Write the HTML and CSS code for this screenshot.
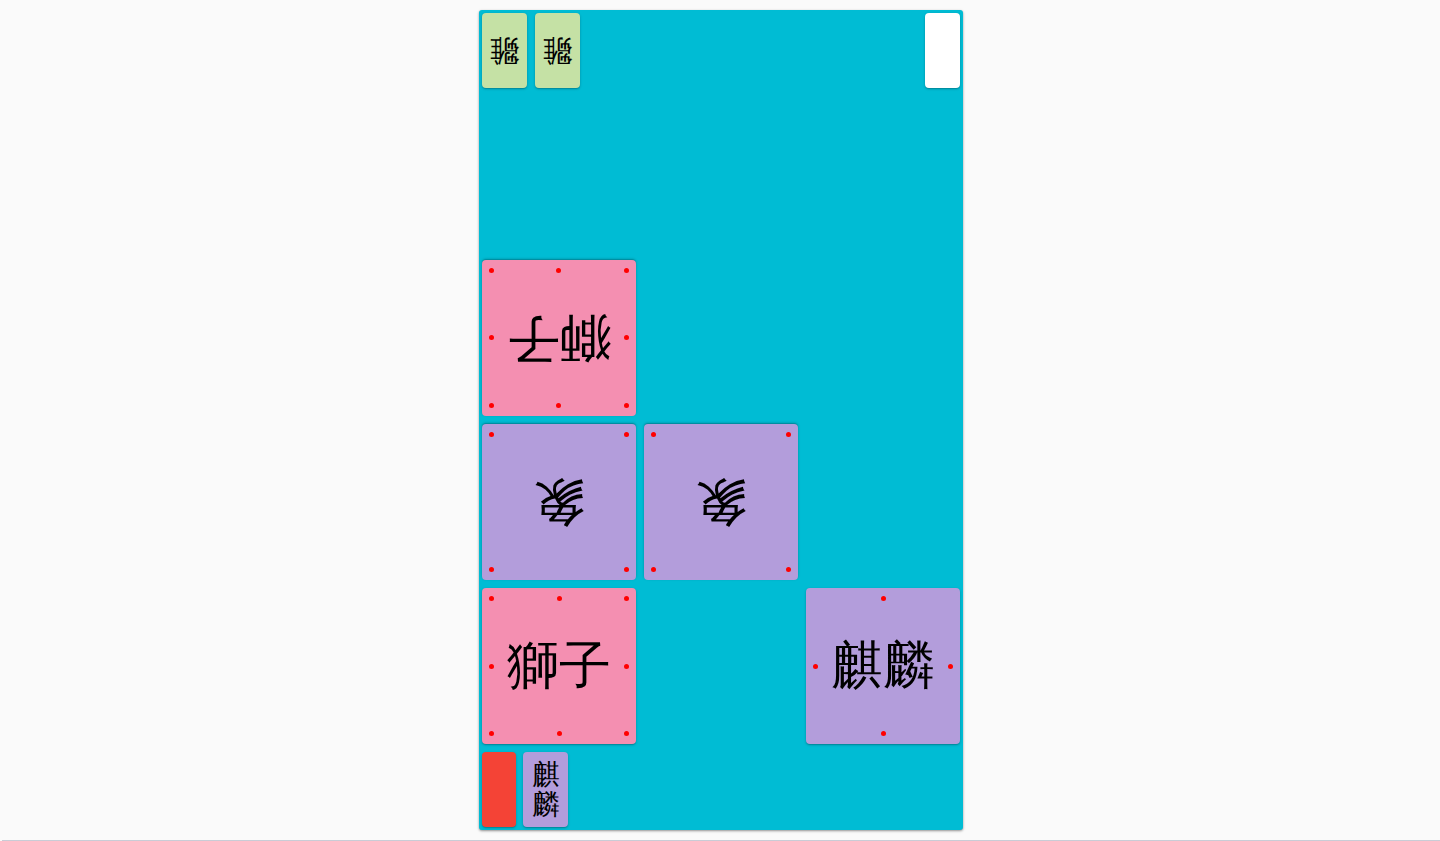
FILE: index.html
```html
<!DOCTYPE html>
<html lang="ja">
<head>
<meta charset="utf-8">
<title>どうぶつしょうぎ</title>
<link rel="stylesheet" href="styles.css">
</head>
<body>
<div class="game">
  <div class="hand hand-top">
    <div class="piece hand-piece chick"><span class="label flip">雛</span></div>
    <div class="piece hand-piece chick"><span class="label flip">雛</span></div>
    <div class="turn turn-white"></div>
  </div>
  <div class="board">
    <div class="cell"></div>
    <div class="cell"></div>
    <div class="cell"></div>

    <div class="cell">
      <div class="piece board-piece lion flip">
        <i class="dot tl"></i><i class="dot tc"></i><i class="dot tr"></i>
        <i class="dot ml"></i><i class="dot mr"></i>
        <i class="dot bl"></i><i class="dot bc"></i><i class="dot br"></i>
        <span class="label">獅子</span>
      </div>
    </div>
    <div class="cell"></div>
    <div class="cell"></div>

    <div class="cell">
      <div class="piece board-piece elephant flip">
        <i class="dot tl"></i><i class="dot tr"></i><i class="dot bl"></i><i class="dot br"></i>
        <span class="label">象</span>
      </div>
    </div>
    <div class="cell">
      <div class="piece board-piece elephant flip">
        <i class="dot tl"></i><i class="dot tr"></i><i class="dot bl"></i><i class="dot br"></i>
        <span class="label">象</span>
      </div>
    </div>
    <div class="cell"></div>

    <div class="cell">
      <div class="piece board-piece lion">
        <i class="dot tl"></i><i class="dot tc"></i><i class="dot tr"></i>
        <i class="dot ml"></i><i class="dot mr"></i>
        <i class="dot bl"></i><i class="dot bc"></i><i class="dot br"></i>
        <span class="label">獅子</span>
      </div>
    </div>
    <div class="cell"></div>
    <div class="cell">
      <div class="piece board-piece giraffe">
        <i class="dot tc"></i><i class="dot ml"></i><i class="dot mr"></i><i class="dot bc"></i>
        <span class="label">麒麟</span>
      </div>
    </div>
  </div>
  <div class="hand hand-bottom">
    <div class="turn turn-red"></div>
    <div class="piece hand-piece giraffe"><span class="label vertical">麒<br>麟</span></div>
  </div>
</div>
<div class="footer-edge"></div>
</body>
</html>
```
FILE: styles.css
```css
html, body {
  margin: 0;
  padding: 0;
  background: #fafafa;
}
body {
  padding: 10px 0 0 2px;
  font-family: serif;
}
.game {
  width: 484px;
  height: 820px;
  margin: 0 auto;
  box-sizing: border-box;
  padding: 3px;
  background: #00bcd4;
  border-radius: 3px;
  box-shadow: 0 1px 3px rgba(0,0,0,0.25), 0 1px 2px rgba(0,0,0,0.2);
  display: flex;
  flex-direction: column;
  gap: 8px;
}
.hand {
  height: 75px;
  display: flex;
  gap: 7px;
  flex-shrink: 0;
}
.hand-top {
  gap: 8px;
}
.hand-top .turn {
  margin-left: auto;
}
.board {
  display: grid;
  grid-template-columns: repeat(3, 1fr);
  grid-template-rows: repeat(4, 156px);
  gap: 8px;
}
.cell {
  display: flex;
}
.piece {
  box-sizing: border-box;
  border-radius: 4px;
  box-shadow: 0 1px 3px rgba(0,0,0,0.2), 0 1px 1px rgba(0,0,0,0.14);
  display: flex;
  align-items: center;
  justify-content: center;
  color: #000;
}
.board-piece {
  position: relative;
  width: 100%;
  height: 100%;
}
.hand-piece {
  width: 45px;
  height: 75px;
}
.turn {
  width: 34px;
  height: 75px;
  border-radius: 4px;
  box-shadow: 0 1px 3px rgba(0,0,0,0.2), 0 1px 1px rgba(0,0,0,0.14);
}
.turn-white { background: #ffffff; width: 35px; }
.turn-red { background: #f44336; }
.lion { background: #f48fb1; }
.elephant { background: #b39ddb; }
.giraffe { background: #b39ddb; }
.chick { background: #c5e1a5; }
.flip { transform: rotate(180deg); }

.board-piece .label {
  font-size: 52px;
  line-height: 1;
  white-space: nowrap;
}
.hand-piece .label {
  font-size: 30px;
  line-height: 1;
}
.hand-piece .vertical {
  font-size: 28px;
  line-height: 30px;
  text-align: center;
}
.dot {
  position: absolute;
  width: 5px;
  height: 5px;
  border-radius: 50%;
  background: #ff0000;
}
.dot.tl { top: 8px; left: 7px; }
.dot.tc { top: 8px; left: calc(50% - 2.5px); }
.dot.tr { top: 8px; right: 7px; }
.dot.ml { top: calc(50% - 2.5px); left: 7px; }
.dot.mr { top: calc(50% - 2.5px); right: 7px; }
.dot.bl { bottom: 8px; left: 7px; }
.dot.bc { bottom: 8px; left: calc(50% - 2.5px); }
.dot.br { bottom: 8px; right: 7px; }
.footer-edge {
  margin-top: 10px;
  height: 1px;
  background: #c9ccd6;
}
```
